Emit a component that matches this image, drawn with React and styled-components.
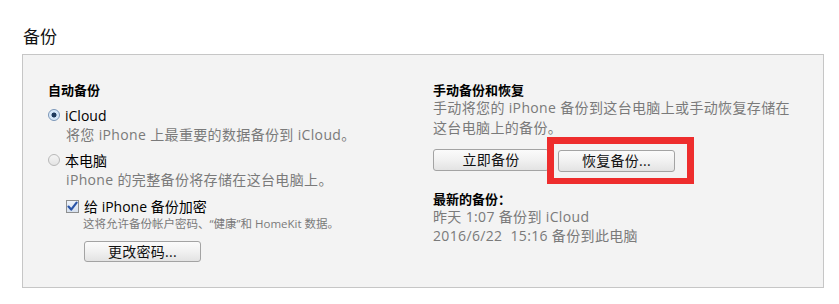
import styled, { createGlobalStyle } from "styled-components";

const GlobalStyle = createGlobalStyle`
  html, body {
    margin: 0;
    padding: 0;
    background: #ffffff;
  }
  body {
    font-family: "Open Sans", "Noto Sans CJK SC", sans-serif;
    color: #000;
  }
`;

const Page = styled.div`
  width: 839px;
  height: 304px;
  padding: 25px 0 0 22px;
  box-sizing: border-box;
`;

const Title = styled.h2`
  margin: 0 0 5px 1px;
  font-size: 17px;
  font-weight: 400;
  line-height: 24px;
  color: #111;
`;

const Panel = styled.div`
  width: 802px;
  height: 234px;
  box-sizing: border-box;
  border: 1px solid #c6c6c6;
  background: #f3f3f3;
  padding: 27px 0 0 25px;
  display: grid;
  grid-template-columns: 385px 1fr;
  align-items: start;
`;

const Column = styled.div`
  display: flex;
  flex-direction: column;
  align-items: flex-start;
`;

const Heading = styled.div`
  font-size: 13px;
  font-weight: 700;
  line-height: 16px;
  color: #000;
`;

const Desc = styled.div`
  font-size: 14px;
  letter-spacing: 0.35px;
  line-height: ${(p) => p.$lh || 20}px;
  margin-top: ${(p) => p.$mt || 0}px;
  color: #7a7a7a;
  padding-left: ${(p) => p.$indent || 0}px;
`;

const Small = styled.div`
  font-size: 11.5px;
  line-height: 16px;
  color: #7a7a7a;
  padding-left: 35px;
`;

const OptionRow = styled.label`
  display: flex;
  align-items: center;
  gap: 5px;
  height: 20px;
  margin-top: ${(p) => p.$mt || 0}px;
  padding-left: ${(p) => p.$indent || 0}px;
  font-size: 14px;
  color: #000;
`;

const Radio = styled.span`
  width: 12px;
  height: 12px;
  box-sizing: border-box;
  border-radius: 50%;
  border: 1px solid ${(p) => (p.$checked ? "#7a96b8" : "#b8b8b8")};
  background: ${(p) =>
    p.$checked
      ? "radial-gradient(circle, #1f3a5c 0 2.2px, #cfe3f7 2.8px, #e9f3fc 100%)"
      : "linear-gradient(#f4f4f4, #e4e4e4)"};
  flex-shrink: 0;
`;

const Check = styled.span`
  width: 13px;
  height: 13px;
  box-sizing: border-box;
  border: 1px solid #8e8f8f;
  background: linear-gradient(#eef3fa, #d6e0ee);
  display: flex;
  align-items: center;
  justify-content: center;
  flex-shrink: 0;
`;

const Button = styled.button`
  width: ${(p) => p.$w || 116}px;
  height: ${(p) => p.$h || 22}px;
  margin-top: ${(p) => p.$mt || 0}px;
  margin-left: ${(p) => p.$ml || 0}px;
  padding: 0;
  box-sizing: border-box;
  border: 1px solid #a3a3a3;
  border-radius: 3px;
  background: linear-gradient(#fbfbfb 0%, #f1f1f1 50%, #e3e3e3 100%);
  font-family: "Open Sans", "Noto Sans CJK SC", sans-serif;
  font-size: 14px;
  letter-spacing: 0.3px;
  color: #111;
  line-height: 1;
  cursor: pointer;
`;

const ButtonRow = styled.div`
  display: flex;
  gap: 9px;
  margin-top: 11px;
`;

const Marked = styled.div`
  position: relative;
`;

const Highlight = styled.span`
  position: absolute;
  left: -11px;
  right: -19px;
  top: -12px;
  bottom: -12px;
  border: 7px solid #ee2d2d;
  border-bottom-width: 6px;
  pointer-events: none;
`;

const Latest = styled.div`
  margin-top: 19px;
`;

const CheckMark = () => (
  <svg width="11" height="11" viewBox="0 0 11 11">
    <path
      d="M1.5 5.6 L4.2 8.6 L9.6 1.6"
      fill="none"
      stroke="#2a55a8"
      strokeWidth="2.2"
      strokeLinecap="round"
      strokeLinejoin="round"
    />
  </svg>
);

export default function App() {
  return (
    <>
      <GlobalStyle />
      <Page>
        <Title>备份</Title>
        <Panel>
          <Column>
            <Heading>自动备份</Heading>
            <OptionRow $mt={7}>
              <Radio $checked />
              iCloud
            </OptionRow>
            <Desc $indent={18}>将您 iPhone 上最重要的数据备份到 iCloud。</Desc>
            <OptionRow $mt={5}>
              <Radio />
              本电脑
            </OptionRow>
            <Desc $indent={18}>iPhone 的完整备份将存储在这台电脑上。</Desc>
            <OptionRow $mt={6} $indent={18}>
              <Check>
                <CheckMark />
              </Check>
              给 iPhone 备份加密
            </OptionRow>
            <Small>这将允许备份帐户密码、“健康”和 HomeKit 数据。</Small>
            <Button $w={117} $h={21} $mt={9} $ml={36}>
              更改密码...
            </Button>
          </Column>
          <Column>
            <Heading>手动备份和恢复</Heading>
            <Desc>
              手动将您的 iPhone 备份到这台电脑上或手动恢复存储在
              <br />
              这台电脑上的备份。
            </Desc>
            <ButtonRow>
              <Button $w={116}>立即备份</Button>
              <Marked>
                <Button $w={117}>恢复备份...</Button>
                <Highlight />
              </Marked>
            </ButtonRow>
            <Latest>
              <Heading>最新的备份：</Heading>
              <Desc $lh={18} $mt={1}>昨天 1:07 备份到 iCloud</Desc>
              <Desc $lh={19}>2016/6/22&nbsp;&nbsp;15:16 备份到此电脑</Desc>
            </Latest>
          </Column>
        </Panel>
      </Page>
    </>
  );
}
